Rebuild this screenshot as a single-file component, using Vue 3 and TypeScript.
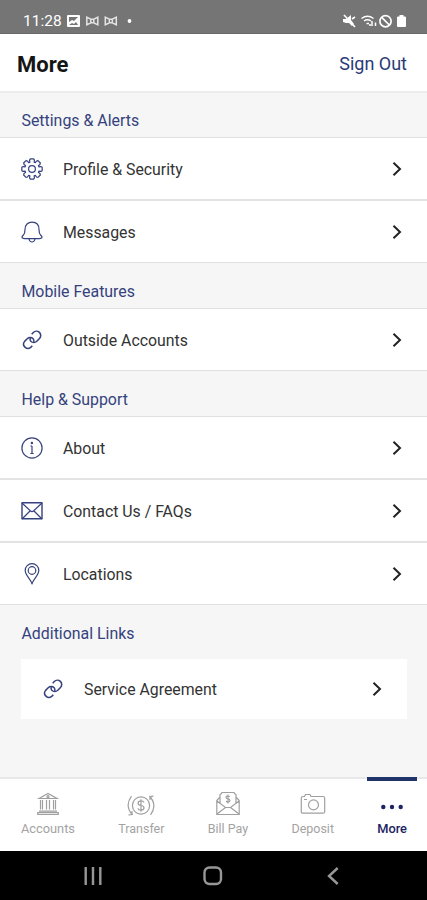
<script setup lang="ts">
interface Item {
  label: string
  icon: 'gear' | 'bell' | 'link' | 'info' | 'mail' | 'pin'
}
interface Group {
  title: string
  key: string
  items: Item[]
}

const groups: Group[] = [
  {
    title: 'Settings & Alerts',
    key: 'settings',
    items: [
      { label: 'Profile & Security', icon: 'gear' },
      { label: 'Messages', icon: 'bell' },
    ],
  },
  { title: 'Mobile Features', key: 'mobile', items: [{ label: 'Outside Accounts', icon: 'link' }] },
  {
    title: 'Help & Support',
    key: 'help',
    items: [
      { label: 'About', icon: 'info' },
      { label: 'Contact Us / FAQs', icon: 'mail' },
      { label: 'Locations', icon: 'pin' },
    ],
  },
  { title: 'Additional Links', key: 'links', items: [{ label: 'Service Agreement', icon: 'link' }] },
]

const tabs = ['Accounts', 'Transfer', 'Bill Pay', 'Deposit', 'More']

// Outline of an eight-toothed cog centred in a 22px box.
function cog(): string {
  const points: string[] = []
  const profile: [number, number][] = [
    [-0.3, 7.2],
    [-0.27, 9.2],
    [-0.16, 10.3],
    [0.16, 10.3],
    [0.27, 9.2],
    [0.3, 7.2],
  ]
  for (let tooth = 0; tooth < 8; tooth++) {
    const base = (tooth * Math.PI) / 4
    for (const [offset, radius] of profile) {
      const x = 11 + radius * Math.sin(base + offset)
      const y = 11 - radius * Math.cos(base + offset)
      points.push(`${x.toFixed(2)} ${y.toFixed(2)}`)
    }
  }
  return `M${points.join('L')}Z`
}
const cogPath = cog()
</script>

<template>
  <div class="screen">
    <div class="status">
      <span class="clock">11:28</span>
      <svg class="notices" width="70" height="14" viewBox="0 0 70 14">
        <path fill="#fff" fill-rule="evenodd" d="M1 1h11a1 1 0 0 1 1 1v10a1 1 0 0 1-1 1H1a1 1 0 0 1-1-1V2a1 1 0 0 1 1-1zM2 3v5l3-2 2 1 4-4zM2 11h9l-2-3-2 2-2-1z" />
        <g fill="none" stroke="#e4e4e4" stroke-width="1.5">
          <path d="M19.800 3.200v7.600l4-2h3l4 2V3.200l-4 2h-3zM23.800 5.200v3.600M26.800 5.200v3.600" />
          <path d="M38.300 3.200v7.600l4-2h3l4 2V3.200l-4 2h-3zM42.300 5.200v3.600M45.300 5.200v3.600" />
        </g>
        <circle cx="62.500" cy="7" r="1.900" fill="#fff" />
      </svg>
      <svg class="system" width="64" height="14" viewBox="0 0 64 14">
        <path fill="#fff" d="M0 5h3l5-4v5l3 4-2 2-3-3H3L0 8z" />
        <path stroke="#fff" stroke-width="1.600" d="M1 1l11 12M9 5l3-2" />
        <g fill="none" stroke="#fff" stroke-width="1.500">
          <path d="M18.500 4.500q6-4.500 12 0M21 7q3.500-2.500 7 0" />
          <path d="M23.500 9.500h2.500M29 7v5M32.500 12V8.500M27 10v2" />
          <circle cx="42.500" cy="7.200" r="5.600" stroke-width="1.700" />
          <path d="M38.700 3.400l7.600 7.600" stroke-width="1.700" />
        </g>
        <path fill="#fff" d="M56.500 1h4v1.500H62q1 0 1 1V12q0 1-1 1h-7q-1 0-1-1V3.500q0-1 1-1h1.500z" />
      </svg>
    </div>

    <header class="header">
      <h1>More</h1>
      <a class="signout">Sign Out</a>
    </header>

    <main class="content">
      <section v-for="group in groups" :key="group.key" class="group" :class="group.key">
        <h2>{{ group.title }}</h2>
        <div class="list">
          <div v-for="item in group.items" :key="item.label" class="row">
            <svg class="icon" width="22" height="22" viewBox="0 0 22 22">
              <template v-if="item.icon === 'gear'">
                <path :d="cogPath" />
                <circle cx="11" cy="11" r="3.400" />
              </template>
              <template v-else-if="item.icon === 'bell'">
                <path d="M3.700 17.700q-2.700-.2-2.700-1.700 0-.8 1.300-1.700Q4 12.500 4 8.500C4 3.700 7 1.200 11 1.200s7 2.500 7 7.300q0 4 1.700 5.800 1.300.9 1.300 1.700 0 1.500-2.700 1.700zM8 18q.6 3 3 3t3-3" />
              </template>
              <template v-else-if="item.icon === 'link'">
                <g stroke-width="1.500">
                  <path d="M10.700 5.200l1.600-1.700a4.300 4.300 0 0 1 6.200 6L15.800 12.200a4.300 4.300 0 0 1-6 0 3.200 3.200 0 0 1-.5-3.200" />
                  <path d="M11.300 16.800l-1.600 1.600a4.300 4.300 0 0 1-6.100-6L6.200 9.800a4.300 4.300 0 0 1 6 0 3.200 3.200 0 0 1 .5 3.200" />
                </g>
              </template>
              <template v-else-if="item.icon === 'info'">
                <circle cx="11" cy="11" r="10.100" />
                <path d="M11 9v7.500M9.400 9H11M9.400 16.500h3.200" />
                <circle class="solid" cx="10.900" cy="6" r=".6" />
              </template>
              <template v-else-if="item.icon === 'mail'">
                <path stroke-width="1.400" d="M1 2.800h20v16H1z" />
                <path d="M1 3l8.500 8q1.500 1.300 3 0L21 3M1 19l8-8M21 19l-8-8" />
              </template>
              <template v-else>
                <path d="M11 20.800C10.300 16.500 4.200 12.500 4.200 7.500a6.800 6.800 0 0 1 13.600 0C17.800 12.500 11.700 16.500 11 20.800z" />
                <circle cx="11" cy="7.500" r="3.800" />
              </template>
            </svg>
            <span class="label">{{ item.label }}</span>
            <svg class="chevron" width="10" height="14" viewBox="0 0 10 14">
              <path d="M1.500 .8L8 7l-6.500 6.200" />
            </svg>
          </div>
        </div>
      </section>
    </main>

    <nav class="tabs">
      <div v-for="tab in tabs" :key="tab" class="tab" :class="{ active: tab === 'More' }">
        <svg width="28" height="26" viewBox="0 0 28 26">
          <template v-if="tab === 'Accounts'">
            <path d="M5 7.500L14 2.500l9 5zM6.500 9v9.500M8.500 9v9.500M12.500 9v9.500M15.500 9v9.500M19.500 9v9.500M21.500 9v9.500M5 20.200h18M3.700 23.500h20.600v-1.800H3.700z" />
            <circle cx="14" cy="5.700" r="1" />
          </template>
          <template v-else-if="tab === 'Transfer'">
            <circle cx="14" cy="14.500" r="8.600" />
            <path d="M17 11.500q-.7-1.700-3-1.700-2.900 0-2.900 2.200t2.900 2.500 3 2.400-3 2.300q-2.500 0-3.200-1.800M14 8.200v12.600M4.500 5.200q-7 9.300.5 18.300l-3.500.3M5 23.500V20M23.500 23.800q7-9.300-.5-18.300l3.500-.3M23 5.500V9" />
          </template>
          <template v-else-if="tab === 'Bill Pay'">
            <path d="M6 6L2.800 9.500v14h22.400v-14L22 6M3 10l8.500 6.500h5L25 10M3 23l8.500-6.500M25 23l-8.500-6.500M6 12V3.500q1.500-.5 2-2h12q.5 1.500 2 2V12" />
            <path d="M16 5.500q-4-1.300-4 .8 0 1.500 2 1.600t2 1.800q-.5 2-4 .7M14 3.500v9" />
          </template>
          <template v-else-if="tab === 'Deposit'">
            <path d="M4 5.500h1.500l1-2h4.500l1 2H24q1.700 0 1.700 1.700v13.500q0 1.500-1.700 1.500H4q-1.700 0-1.700-1.500V7.200Q2.300 5.500 4 5.500zM5 8.500h3" />
            <circle cx="14.500" cy="13.900" r="5" />
          </template>
          <g v-else class="dots">
            <circle cx="5.300" cy="16" r="2.200" />
            <circle cx="14" cy="16" r="2.200" />
            <circle cx="22.700" cy="16" r="2.200" />
          </g>
        </svg>
        <span>{{ tab }}</span>
      </div>
    </nav>

    <div class="system-nav">
      <svg width="18" height="18" viewBox="0 0 18 18"><path d="M1.700 0v18M9 0v18M16.300 0v18" /></svg>
      <svg width="20" height="20" viewBox="0 0 20 20"><rect x="1.500" y="1.500" width="16.500" height="16.500" rx="5" /></svg>
      <svg width="12" height="18" viewBox="0 0 12 18"><path d="M10.700 1L2 9l8.700 8" /></svg>
    </div>
  </div>
</template>

<style>
body {
  margin: 0;
}
</style>

<style scoped>
.screen {
  width: 427px;
  height: 900px;
  display: flex;
  flex-direction: column;
  overflow: hidden;
  background: #f6f6f6;
  font-family: Roboto, sans-serif;
  color: #333;
}
.status {
  box-sizing: border-box;
  height: 34px;
  flex: none;
  display: flex;
  align-items: center;
  padding: 8px 20px 0 23px;
  background: #757575;
  border-bottom: 1px solid #686868;
  color: #fff;
}
.clock {
  width: 44px;
  font-size: 15.5px;
}
.system {
  margin-left: auto;
}
.header {
  box-sizing: border-box;
  height: 59px;
  flex: none;
  display: flex;
  align-items: center;
  justify-content: space-between;
  padding: 2px 20px 0 17px;
  background: #fff;
  border-bottom: 2px solid #ececec;
}
h1 {
  margin: 0;
  padding-top: 1px;
  font-size: 22px;
  font-weight: 700;
  color: #151515;
}
.signout {
  font-size: 18px;
  color: #2b3a78;
}
.content {
  flex: 1;
}
h2 {
  box-sizing: border-box;
  height: 46px;
  margin: 0;
  padding: 19px 21.5px 0;
  border-bottom: 1px solid #e0e0e0;
  font-size: 15.9px;
  line-height: 20px;
  font-weight: 400;
  color: #35427d;
}
.settings h2 {
  height: 45px;
  padding-top: 18px;
}
.row {
  box-sizing: border-box;
  height: 63px;
  display: flex;
  align-items: center;
  padding: 0 25px 0 21px;
  background: #fff;
  border-bottom: 2px solid #e3e3e3;
}
.row:last-child {
  height: 62px;
  border-bottom: 1px solid #e0e0e0;
}
.icon {
  fill: none;
  stroke: #35427d;
  stroke-width: 1.2;
  stroke-linejoin: round;
}
.solid {
  fill: #35427d;
}
.label {
  margin-left: 20px;
  padding-top: 2px;
  font-size: 15.85px;
  line-height: 20px;
}
.chevron {
  margin-left: auto;
  fill: none;
  stroke: #222;
  stroke-width: 2;
}
.links h2 {
  height: 54px;
  border: 0;
}
.links .list {
  margin: 0 20px 0 21px;
}
.links .row:last-child {
  height: 60px;
  border: 0;
}
.tabs {
  box-sizing: border-box;
  height: 74px;
  flex: none;
  display: flex;
  justify-content: space-between;
  padding: 0 10px 0 11px;
  background: #fff;
  border-top: 2px solid #e8e8e8;
}
.tab {
  display: flex;
  flex-direction: column;
  align-items: center;
  padding: 12px 10px 0;
  font-size: 12.5px;
  line-height: 16px;
  color: #a3a3a3;
}
.tab svg {
  margin-bottom: 4px;
  fill: none;
  stroke: #a0a0a0;
  stroke-width: 1.2;
}
.tab:first-child {
  font-size: 12.8px;
}
.tab.active {
  margin-top: -2px;
  padding-top: 10px;
  border-top: 4px solid #203469;
  font-weight: 500;
  font-size: 12.8px;
  color: #1c2463;
}
.tab .dots {
  fill: #1c2463;
  stroke: none;
}
.system-nav {
  height: 49px;
  flex: none;
  display: flex;
  align-items: center;
  justify-content: space-between;
  box-sizing: border-box;
  padding: 0 88px 0 84px;
  background: #000;
}
.system-nav svg {
  fill: none;
  stroke: #979797;
  stroke-width: 2.4;
}
.system-nav svg:nth-child(2) {
  margin-right: 3px;
}
</style>
